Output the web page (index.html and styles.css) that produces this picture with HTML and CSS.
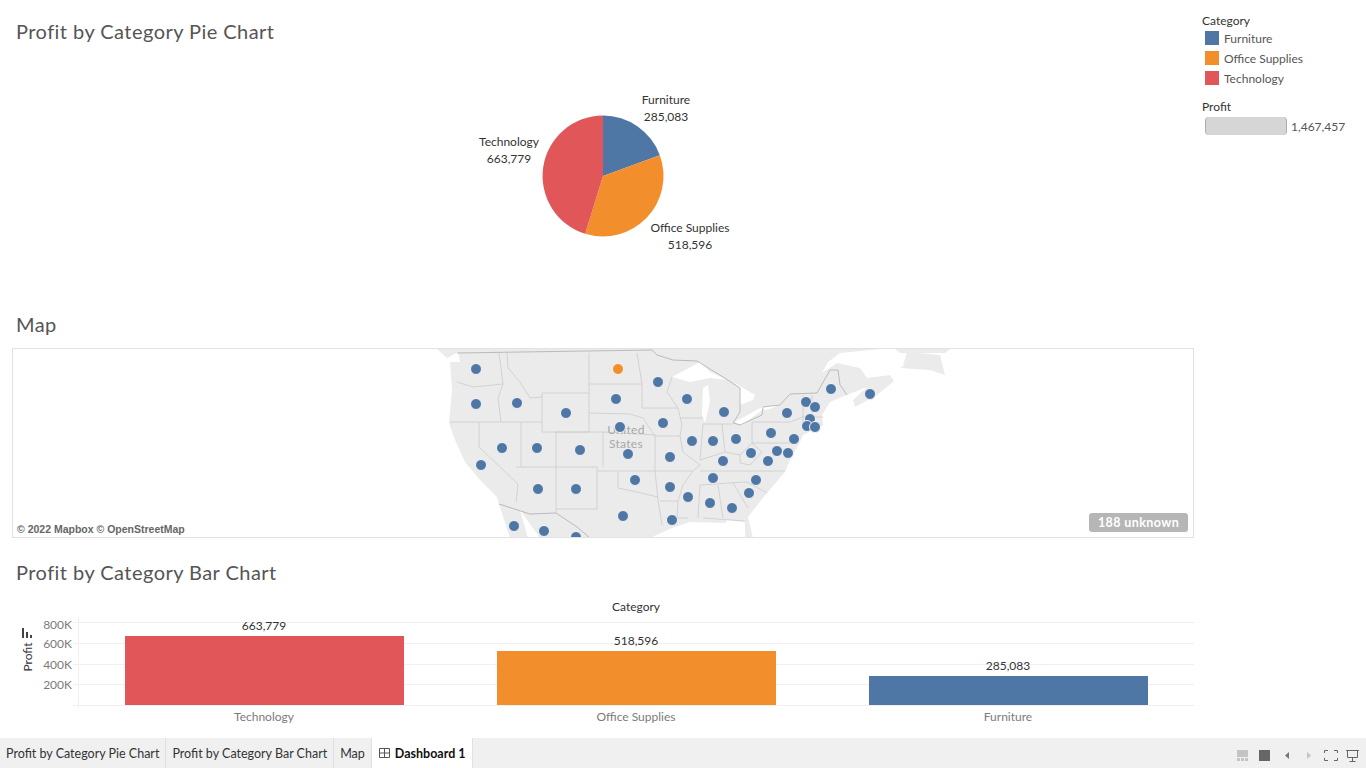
FILE: index.html
```html
<!DOCTYPE html>
<html lang="en">
<head>
    <meta charset="UTF-8">
    <title>Dashboard 1</title>
    <link rel="stylesheet" href="styles.css">
</head>
<body>
    <div class="main">
        <div class="dashboard">
            <div class="sheet sheet-pie">
                <div class="sheet-title">Profit by Category Pie Chart</div>
                <svg class="chart" width="1182" height="263" viewBox="12 45 1182 263">
                    <path class="furniture" d="M603 176 L603 115.5 A60.5 60.5 0 0 1 659.8 155.2 Z"/>
                    <path class="office" d="M603 176 L659.8 155.2 A60.5 60.5 0 0 1 585.2 233.8 Z"/>
                    <path class="technology" d="M603 176 L585.2 233.8 A60.5 60.5 0 0 1 603 115.5 Z"/>
                    <text class="mark-label" x="666" y="104">Furniture</text>
                    <text class="mark-label" x="666" y="121">285,083</text>
                    <text class="mark-label" x="509" y="146">Technology</text>
                    <text class="mark-label" x="509" y="163">663,779</text>
                    <text class="mark-label" x="690" y="232">Office Supplies</text>
                    <text class="mark-label" x="690" y="249">518,596</text>
                </svg>
            </div>

            <div class="sheet sheet-map">
                <div class="sheet-title">Map</div>
                <div class="map">
                    <svg class="chart" width="1180" height="188" viewBox="13 349 1180 188">
                        <path class="land" d="M437 349 L880 349 L840 353 L828 362 L822 373 L837 363 L860 368 L867 378 L890 375 L894 381 L877 395 L855 407 L853 400 L867 387 L847 395 L830 402 L822 415 L823 425 L803 435 L800 442 L790 460 L785 472 L767 493 L748 517 L753 538 L745 538 L745 522 L727 520 L725 523 L690 522 L672 528 L650 538 L540 538 L520 510 L528 538 L510 538 L499 504 L497 497 L480 480 L465 462 L455 440 L449 423 L452 390 L450 362 L460 362 L458 352 L447 358 Z"/>
                        <path class="land" d="M903 366 L907 352 L940 355 L945 375 L930 370 L900 368 Z"/>
                        <path class="land" d="M895 349 L950 349 L945 353 L900 353 Z"/>
                        <path class="lake" d="M672 377 L700 362 L710 372 L727 380 L710 378 L690 382 Z"/>
                        <path class="lake" d="M703 388 L708 385 L710 402 L705 423 L702 415 Z"/>
                        <path class="lake" d="M733 382 L755 395 L753 400 L740 405 L740 388 Z"/>
                        <path class="lake" d="M735 422 L762 407 L765 408 L742 425 Z"/>
                        <path class="lake" d="M762 407 L778 405 L773 408 L765 410 Z"/>

                        <path class="border-major" d="M457 353 L652 350 L657 355 L673 360 L697 361 L723 377 L740 388 L740 412 L733 423 L740 425 L762 415 L763 407 L780 405 L790 394 L817 393 L830 370 L838 370 L840 385 L847 395"/>
                        <path class="border-major" d="M499 504 L530 514 L556 513 L577 527 L590 538"/>
                        <path class="border" d="M457 382 L473 387 L503 384 M499 353 L503 384 L498 398 L501 422 M450 422 L542 422 M479 422 L479 447 L518 484 L516 502 M521 422 L521 467 M516 467 L597 467 M556 432 L556 513 M542 393 L589 393 L589 432 L542 432 Z M556 432 L603 432 L603 467 M597 467 L597 509 L556 509"/>
                        <path class="border" d="M507 353 L508 368 L520 382 L530 398 L542 397 M589 353 L589 393 M589 384 L642 384 M589 413 L630 414 L643 418 L655 436 L680 436 M603 432 L655 435 M637 353 L642 384 L642 408 L678 408 L667 392 L672 377 M678 408 L682 425 L680 436 L683 452 L700 465 M680 418 L703 418"/>
                        <path class="border" d="M598 471 L693 471 L700 465 M655 435 L655 471 L658 500 L662 525 M618 472 L618 488 L637 492 L658 497 M660 501 L678 501 L683 485 L693 471 M678 501 L677 518 L688 518"/>
                        <path class="border" d="M703 424 L700 460 L725 452 L740 455 L752 443 M722 424 L725 452 M703 424 L732 424 M752 422 L752 443 L790 443 M752 422 L790 422 M700 471 L785 471 M740 455 L740 463 L750 465 L762 452 L752 443 M700 485 L745 482 L747 482 L767 493 M700 485 L698 518 M718 485 L723 518 M703 518 L745 521 M733 483 L748 508 M812 395 L812 417 M803 417 L823 417 M802 425 L818 423 M803 395 L803 425 M790 422 L803 417"/>

                        <text class="map-label" x="626" y="434">United</text>
                        <text class="map-label" x="626" y="448">States</text>

                        <g class="dots">
                            <circle cx="476" cy="369" r="5.5"/>
                            <circle cx="658" cy="382" r="5.5"/>
                            <circle cx="476" cy="404" r="5.5"/>
                            <circle cx="517" cy="403" r="5.5"/>
                            <circle cx="566" cy="413" r="5.5"/>
                            <circle cx="616" cy="399" r="5.5"/>
                            <circle cx="687" cy="399" r="5.5"/>
                            <circle cx="663" cy="423" r="5.5"/>
                            <circle cx="620" cy="427" r="5.5"/>
                            <circle cx="692" cy="441" r="5.5"/>
                            <circle cx="502" cy="448" r="5.5"/>
                            <circle cx="537" cy="448" r="5.5"/>
                            <circle cx="580" cy="450" r="5.5"/>
                            <circle cx="628" cy="454" r="5.5"/>
                            <circle cx="670" cy="457" r="5.5"/>
                            <circle cx="481" cy="465" r="5.5"/>
                            <circle cx="635" cy="480" r="5.5"/>
                            <circle cx="670" cy="487" r="5.5"/>
                            <circle cx="538" cy="489" r="5.5"/>
                            <circle cx="576" cy="489" r="5.5"/>
                            <circle cx="688" cy="497" r="5.5"/>
                            <circle cx="623" cy="516" r="5.5"/>
                            <circle cx="672" cy="520" r="5.5"/>
                            <circle cx="514" cy="526" r="5.5"/>
                            <circle cx="544" cy="531" r="5.5"/>
                            <circle cx="576" cy="537" r="5.5"/>
                            <circle cx="724" cy="412" r="5.5"/>
                            <circle cx="831" cy="389" r="5.5"/>
                            <circle cx="870" cy="394" r="5.5"/>
                            <circle cx="806" cy="402" r="5.5"/>
                            <circle cx="815" cy="407" r="5.5"/>
                            <circle cx="787" cy="413" r="5.5"/>
                            <circle cx="810" cy="419" r="5.5"/>
                            <circle cx="807" cy="426" r="5.5"/>
                            <circle cx="815" cy="427" r="5.5"/>
                            <circle cx="771" cy="433" r="5.5"/>
                            <circle cx="794" cy="439" r="5.5"/>
                            <circle cx="713" cy="441" r="5.5"/>
                            <circle cx="736" cy="439" r="5.5"/>
                            <circle cx="751" cy="453" r="5.5"/>
                            <circle cx="777" cy="451" r="5.5"/>
                            <circle cx="788" cy="453" r="5.5"/>
                            <circle cx="768" cy="461" r="5.5"/>
                            <circle cx="723" cy="461" r="5.5"/>
                            <circle cx="713" cy="478" r="5.5"/>
                            <circle cx="756" cy="480" r="5.5"/>
                            <circle cx="749" cy="493" r="5.5"/>
                            <circle cx="710" cy="503" r="5.5"/>
                            <circle cx="732" cy="508" r="5.5"/>
                            <circle class="dot-orange" cx="618" cy="369" r="5.5"/>
                        </g>
                    </svg>
                    <div class="map-credit">© 2022 Mapbox © OpenStreetMap</div>
                    <div class="map-unknown">188 unknown</div>
                </div>
            </div>

            <div class="sheet sheet-bar">
                <div class="sheet-title">Profit by Category Bar Chart</div>
                <svg class="chart" width="1182" height="152" viewBox="12 586 1182 152">
                    <text class="axis-title" x="636" y="611">Category</text>

                    <path class="grid" d="M73 622.5 H1194 M73 643.5 H1194 M73 664.5 H1194 M73 684.5 H1194 M73 705.5 H1194 M78.5 617 V708"/>

                    <text class="tick" x="72" y="629">800K</text>
                    <text class="tick" x="72" y="648">600K</text>
                    <text class="tick" x="72" y="669">400K</text>
                    <text class="tick" x="72" y="689">200K</text>

                    <path class="sort-icon" d="M22 628 h2 v10 h-2 Z M26 632 h2 v6 h-2 Z M30 635 h2 v3 h-2 Z"/>
                    <text class="axis-title" transform="translate(32 657) rotate(-90)">Profit</text>

                    <rect class="technology" x="125" y="636" width="279" height="69"/>
                    <rect class="office" x="497" y="651" width="279" height="54"/>
                    <rect class="furniture" x="869" y="676" width="279" height="29"/>

                    <text class="mark-label" x="264" y="630">663,779</text>
                    <text class="mark-label" x="636" y="645">518,596</text>
                    <text class="mark-label" x="1008" y="670">285,083</text>

                    <text class="cat-label" x="264" y="721">Technology</text>
                    <text class="cat-label" x="636" y="721">Office Supplies</text>
                    <text class="cat-label" x="1008" y="721">Furniture</text>
                </svg>
            </div>
        </div>

        <div class="legend">
            <div class="legend-title">Category</div>
            <div class="legend-row"><span class="swatch swatch-furniture"></span>Furniture</div>
            <div class="legend-row"><span class="swatch swatch-office"></span>Office Supplies</div>
            <div class="legend-row"><span class="swatch swatch-technology"></span>Technology</div>
            <div class="legend-title legend-title-size">Profit</div>
            <div class="size-row">
                <span class="size-bar"></span>
                <span>1,467,457</span>
            </div>
        </div>
    </div>

    <div class="tabs">
        <div class="tab">Profit by Category Pie Chart</div>
        <div class="tab">Profit by Category Bar Chart</div>
        <div class="tab">Map</div>
        <div class="tab tab-active">
            <svg width="11" height="10" viewBox="0 0 11 10">
                <path class="tab-icon" d="M0.5 0.5 H10.5 V9.5 H0.5 Z M5.5 0.5 V9.5 M0.5 5 H10.5"/>
            </svg>
            Dashboard 1
        </div>
        <svg class="tools" width="136" height="30" viewBox="1230 738 136 30">
            <rect class="tool-off" x="1237" y="750" width="11" height="7"/>
            <rect class="tool-off" x="1237" y="758" width="3" height="3"/>
            <rect class="tool-off" x="1241" y="758" width="3" height="3"/>
            <rect class="tool-off" x="1245" y="758" width="3" height="3"/>
            <rect class="tool-on" x="1259" y="750" width="11" height="11"/>
            <path class="tool-prev" d="M1289 752 V759 L1285 755.5 Z"/>
            <path class="tool-off" d="M1307 752 V759 L1311 755.5 Z"/>
            <path class="tool-line" d="M1324.5 753 V750.5 H1328 M1334 750.5 H1337.5 V753 M1337.5 758 V760.5 H1334 M1328 760.5 H1324.5 V758"/>
            <path class="tool-line" d="M1346 750.5 H1359 M1347.5 750.5 V757.5 H1357.5 V750.5 M1352.5 757.5 V761 M1349.5 761.5 H1355.5"/>
        </svg>
    </div>
</body>
</html>
```

FILE: styles.css
```css
html, body {
    margin: 0;
    padding: 0;
    height: 768px;
    overflow: hidden;
    background-color: #ffffff;
    font-family: Lato, "Open Sans", sans-serif;
}
.main {
    display: flex;
    height: 738px;
}
.dashboard {
    width: 1182px;
    padding-left: 12px;
    flex: none;
}
.sheet-title {
    height: 28px;
    line-height: 28px;
    padding-left: 4px;
    font-size: 20px;
    letter-spacing: 0.45px;
    color: #555555;
}
.chart {
    display: block;
}
.sheet-pie {
    padding-top: 17px;
    height: 293px;
}
.sheet-map .sheet-title {
    margin-bottom: 10px;
}
.sheet-bar {
    margin-top: 20px;
}
.map {
    position: relative;
    height: 190px;
    box-sizing: border-box;
    border: 1px solid #e2e2e2;
    overflow: hidden;
}
.map-credit {
    position: absolute;
    left: 4px;
    bottom: 2px;
    font-family: "Liberation Sans", Arial, sans-serif;
    font-size: 10.5px;
    font-weight: bold;
    color: #666666;
}
.map-unknown {
    position: absolute;
    right: 5px;
    bottom: 5px;
    width: 99px;
    height: 19px;
    line-height: 19px;
    text-align: center;
    border-radius: 3px;
    background-color: #b6b6b6;
    color: #ffffff;
    font-size: 12.5px;
    font-weight: bold;
    letter-spacing: 0.4px;
}
.land {
    fill: #ebebeb;
}
.lake {
    fill: #ffffff;
}
.border {
    fill: none;
    stroke: #cbcbcb;
    stroke-width: 0.8;
}
.border-major {
    fill: none;
    stroke: #adadad;
    stroke-width: 0.8;
}
.map-label {
    font-size: 12px;
    fill: #a8a8a8;
    text-anchor: middle;
    letter-spacing: 0.3px;
}
.dots circle {
    fill: #4e77a5;
    stroke: #f4f4f4;
    stroke-width: 1;
}
.dots .dot-orange {
    fill: #f28e2b;
}
.furniture {
    fill: #4e77a5;
}
.office {
    fill: #f28e2b;
}
.technology {
    fill: #e15759;
}
.mark-label {
    font-size: 12px;
    fill: #333333;
    text-anchor: middle;
}
.axis-title {
    font-size: 12px;
    fill: #333333;
    text-anchor: middle;
}
.tick {
    font-size: 12px;
    fill: #7b7b7b;
    text-anchor: end;
}
.cat-label {
    font-size: 12px;
    fill: #7b7b7b;
    text-anchor: middle;
}
.grid {
    fill: none;
    stroke: #f0f0f0;
    stroke-width: 1;
}
.sort-icon {
    fill: #444444;
}
.legend {
    padding: 13px 0 0 8px;
    font-size: 12px;
    color: #555555;
}
.legend-title {
    height: 15px;
    line-height: 15px;
    color: #333333;
}
.legend-title-size {
    margin-top: 11px;
}
.legend-row {
    display: flex;
    align-items: center;
    height: 20px;
    padding-left: 3px;
    gap: 5px;
}
.swatch {
    width: 14px;
    height: 14px;
}
.swatch-furniture {
    background-color: #4e77a5;
}
.swatch-office {
    background-color: #f28e2b;
}
.swatch-technology {
    background-color: #e15759;
}
.size-row {
    display: flex;
    align-items: center;
    gap: 4px;
    margin-top: 3px;
    padding-left: 3px;
    height: 18px;
}
.size-bar {
    box-sizing: border-box;
    width: 82px;
    height: 18px;
    background-color: #d6d6d6;
    border-left: 1px solid #adadad;
    border-right: 1px solid #adadad;
    border-radius: 4px;
}
.tabs {
    display: flex;
    height: 30px;
    background-color: #f0f0f0;
    font-size: 12.5px;
    color: #333333;
}
.tab {
    display: flex;
    align-items: center;
    padding: 0 6px;
    border-right: 1px solid #e0e0e0;
}
.tab-active {
    background-color: #ffffff;
    color: #111111;
    font-weight: bold;
    gap: 5px;
    padding-left: 7px;
    margin-left: 0;
}
.tab-icon {
    fill: none;
    stroke: #555555;
    stroke-width: 1;
}
.tools {
    margin-left: auto;
}
.tool-off {
    fill: #c4c4c4;
}
.tool-on {
    fill: #666666;
}
.tool-prev {
    fill: #777777;
}
.tool-line {
    fill: none;
    stroke: #666666;
    stroke-width: 1;
}
```
